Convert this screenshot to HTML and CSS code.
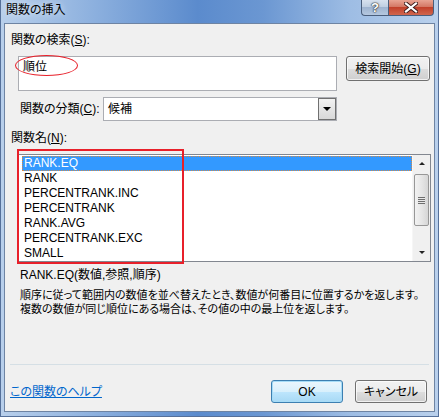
FILE: index.html
```html
<!DOCTYPE html>
<html lang="ja">
<head>
<meta charset="utf-8">
<title>関数の挿入</title>
<link rel="stylesheet" href="styles.css">
</head>
<body>
<div class="window">
  <div class="titlebar">
    <span class="title">関数の挿入</span>
    <div class="controls">
      <div class="ctl help">?</div>
      <div class="ctl close">
        <svg width="14" height="11" viewBox="0 0 14 11"><path d="M2 1.5 L12 9.5 M12 1.5 L2 9.5" stroke="#3a1a1a" stroke-width="4" stroke-linecap="square"/><path d="M2 1.5 L12 9.5 M12 1.5 L2 9.5" stroke="#ffffff" stroke-width="2.2" stroke-linecap="square"/></svg>
      </div>
    </div>
  </div>
  <div class="client">
    <div class="label first">関数の検索(<u>S</u>):</div>
    <div class="search-row">
      <div class="searchbox">順位<span class="mark-ellipse"></span></div>
      <div class="button search">検索開始(<u>G</u>)</div>
    </div>
    <div class="cat-row">
      <span class="cat-label">関数の分類(<u>C</u>):</span>
      <div class="select">
        <span class="select-value">候補</span>
        <div class="drop"><span class="tri-down"></span></div>
      </div>
    </div>
    <div class="label second">関数名(<u>N</u>):</div>
    <div class="listbox">
      <ul class="items">
        <li class="selected">RANK.EQ</li>
        <li>RANK</li>
        <li>PERCENTRANK.INC</li>
        <li>PERCENTRANK</li>
        <li>RANK.AVG</li>
        <li>PERCENTRANK.EXC</li>
        <li>SMALL</li>
      </ul>
      <div class="scrollbar">
        <div class="sb-btn"><span class="tri-up small"></span></div>
        <div class="sb-track">
          <div class="thumb"><span class="grip"></span></div>
        </div>
        <div class="sb-btn"><span class="tri-down small"></span></div>
      </div>
      <span class="mark-rect"></span>
    </div>
    <div class="syntax">RANK.EQ(数値,参照,順序)</div>
    <div class="desc">順序に従って範囲内の数値を並べ替えたとき、数値が何番目に位置するかを返します。<br>複数の数値が同じ順位にある場合は、その値の中の最上位を返します。</div>
    <div class="sep"></div>
    <div class="footer">
      <a class="helplink" href="#">この関数のヘルプ</a>
      <div class="buttons">
        <div class="button ok">OK</div>
        <div class="button">キャンセル</div>
      </div>
    </div>
  </div>
</div>
</body>
</html>
```
FILE: styles.css
```css
* { box-sizing: border-box; }
html, body { margin: 0; padding: 0; }
body {
  width: 439px;
  height: 417px;
  overflow: hidden;
  font-family: "Liberation Sans", "Noto Sans CJK JP", sans-serif;
  font-size: 12px;
  font-feature-settings: "palt";
  color: #000;
  background: #fff;
}
u { text-decoration: underline; text-underline-offset: 1px; }

.window {
  width: 439px;
  height: 417px;
  display: flex;
  flex-direction: column;
  padding: 0 3px 4px 3px;
  background:
    linear-gradient(to right, #b8cfeb 0%, #8fb2df 20%, #5b8bcd 45%, #6b97d2 60%, #9ebde4 80%, #b9d0ec 100%);
  border: 1px solid #55709a;
  border-top: none;
}
.titlebar {
  height: 23px;
  display: flex;
  align-items: flex-start;
  justify-content: space-between;
  margin: 0 -3px 0 0;
}
.title {
  padding: 2px 0 0 2px;
  line-height: 16px;
  font-size: 12px;
  color: #000;
  text-shadow: 0 0 6px rgba(255,255,255,0.8);
}
.controls {
  display: flex;
  margin-right: 4px;
}
.ctl {
  height: 16px;
  border: 1px solid #4a5e7c;
  border-top: none;
  display: flex;
  align-items: center;
  justify-content: center;
}
.help {
  width: 27px;
  border-radius: 0 0 0 4px;
  border-right: none;
  background: linear-gradient(#d7e1ee 0%, #c0cfe2 45%, #9fb4d0 50%, #b5c8e0 100%);
  color: #fff;
  font-weight: bold;
  font-size: 13px;
  line-height: 14px;
  text-shadow: 0 0 1px #333, 0 0 1px #333, 0 0 2px #333;
}
.close {
  width: 46px;
  border-radius: 0 0 4px 0;
  background: linear-gradient(#e8a493 0%, #d47865 45%, #c2412b 50%, #d0664e 100%);
}

.client {
  flex: 1;
  display: flex;
  flex-direction: column;
  background: #f0f0f0;
  border: 1px solid #6e84a3;
}
.label {
  line-height: 16px;
  padding-left: 6px;
}
.label.first { margin-top: 8px; }
.label.second { margin-top: 9px; }

.search-row {
  display: flex;
  align-items: flex-start;
  margin: 8px 0 0 13px;
}
.searchbox {
  position: relative;
  width: 319px;
  height: 35px;
  background: #fff;
  border: 1px solid #abadb3;
  padding: 2px 4px;
  line-height: 16px;
}
.mark-ellipse {
  position: absolute;
  left: -4px;
  top: -2px;
  width: 63px;
  height: 21px;
  border: 1.5px solid #e8202a;
  border-radius: 50%;
}
.button {
  height: 23px;
  border: 1px solid #707070;
  border-radius: 3px;
  background: linear-gradient(#f2f2f2 0%, #ebebeb 50%, #dddddd 51%, #cfcfcf 100%);
  box-shadow: inset 0 0 0 1px rgba(255,255,255,0.7);
  display: flex;
  align-items: center;
  justify-content: center;
  line-height: 16px;
}
.button.search {
  width: 84px;
  height: 25px;
  margin-left: 9px;
}

.cat-row {
  display: flex;
  align-items: center;
  margin: 6px 0 0 15px;
}
.cat-label {
  width: 83px;
  line-height: 16px;
}
.select {
  width: 234px;
  height: 24px;
  border: 1px solid #abadb3;
  background: #fff;
  display: flex;
  align-items: stretch;
  justify-content: space-between;
}
.select-value {
  padding-left: 4px;
  line-height: 22px;
}
.drop {
  width: 18px;
  border: 1px solid #707070;
  background: linear-gradient(#f2f2f2, #d8d8d8);
  display: flex;
  align-items: center;
  justify-content: center;
}
.tri-down {
  width: 0; height: 0;
  border-left: 4px solid transparent;
  border-right: 4px solid transparent;
  border-top: 4px solid #000;
}
.tri-up {
  width: 0; height: 0;
  border-left: 4px solid transparent;
  border-right: 4px solid transparent;
  border-bottom: 4px solid #000;
}
.tri-up.small, .tri-down.small {
  border-left-width: 3.5px;
  border-right-width: 3.5px;
}
.tri-up.small { border-bottom-width: 3px; border-bottom-color: #222; }
.tri-down.small { border-top-width: 3px; border-top-color: #222; }

.listbox {
  position: relative;
  margin: 8px 0 0 13px;
  width: 413px;
  height: 108px;
  border: 1px solid #828790;
  background: #fff;
  display: flex;
}
.items {
  list-style: none;
  margin: 0;
  padding: 1px 0 0 3px;
  flex: 1;
}
.items li {
  height: 15px;
  line-height: 15px;
  padding-left: 2px;
}
.items li.selected {
  background: #3399ff;
  color: #fff;
  outline: 1px dotted #d08a4a;
  outline-offset: -1px;
}
.scrollbar {
  width: 18px;
  display: flex;
  flex-direction: column;
  background: #f0f0f0;
  border-left: 1px solid #f6f6f6;
}
.sb-btn {
  height: 17px;
  display: flex;
  align-items: center;
  justify-content: center;
}
.sb-track {
  flex: 1;
  padding: 2px 1px 0 1px;
}
.thumb {
  height: 52px;
  border: 1px solid #979797;
  border-radius: 2px;
  background: linear-gradient(to right, #f2f2f2 0%, #e6e6e6 50%, #d6d6d6 100%);
  display: flex;
  align-items: center;
  justify-content: center;
}
.grip {
  width: 7px;
  height: 7px;
  background: repeating-linear-gradient(#6e6e6e 0 1px, #e8e8e8 1px 2px);
}
.mark-rect {
  position: absolute;
  left: -2px;
  top: -6px;
  width: 167px;
  height: 115px;
  border: 2px solid #e8202a;
}

.syntax {
  margin-top: 5px;
  padding-left: 15px;
  line-height: 16px;
}
.desc {
  margin-top: 5px;
  padding-left: 15px;
  line-height: 14px;
  font-size: 11px;
  white-space: nowrap;
}
.sep {
  margin: auto 5px 0 5px;
  height: 1px;
  background: #d5dfe5;
}
.footer {
  margin-top: 15px;
  padding: 0 7px 8px 5px;
  display: flex;
  align-items: center;
  justify-content: space-between;
}
.helplink {
  color: #0066cc;
  text-decoration: underline;
  line-height: 16px;
}
.buttons {
  display: flex;
  gap: 12px;
}
.buttons .button { width: 72px; }
.button.ok {
  border-color: #3c7fb1;
  background: linear-gradient(#eaf6fd 0%, #d9f0fc 50%, #bee6fd 51%, #a7d9f5 100%);
  box-shadow: inset 0 0 0 1px #a6dcf7;
}
```
